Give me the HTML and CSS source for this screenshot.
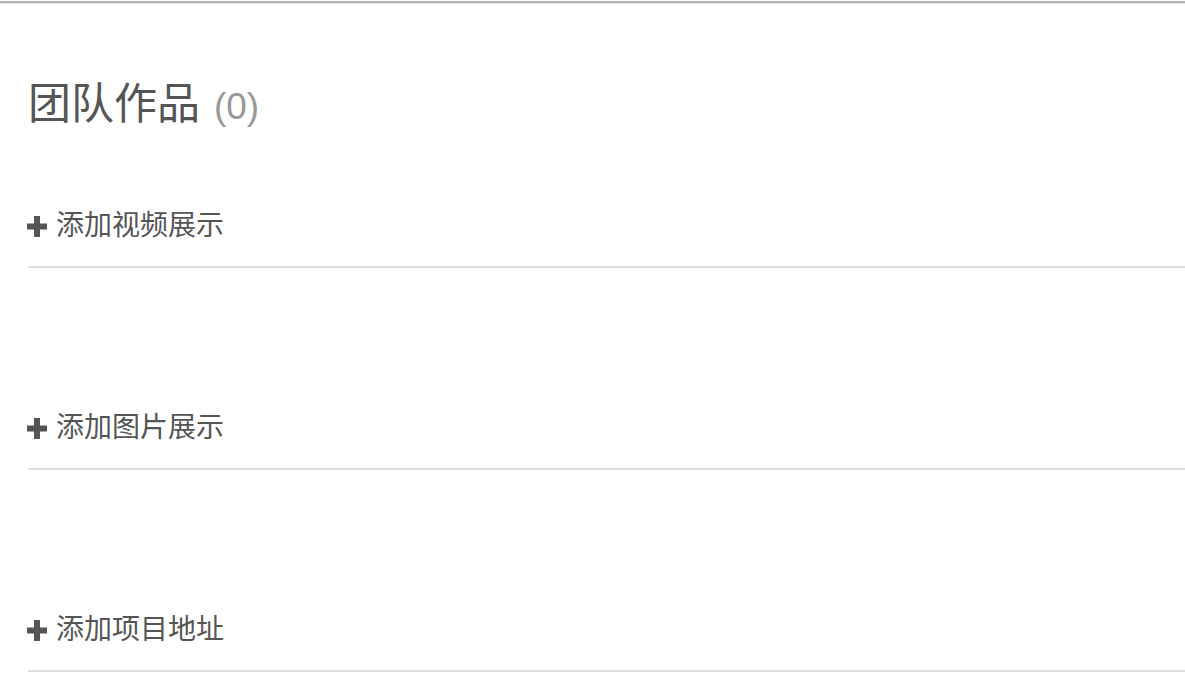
FILE: index.html
```html
<!DOCTYPE html>
<html lang="zh">
<head>
<meta charset="utf-8">
<title>团队作品</title>
<link rel="stylesheet" href="styles.css">
</head>
<body>
<div class="topbar"></div>
<main class="page">
  <h1 class="title">团队作品 <span class="count">(0)</span></h1>
  <div class="sections">
    <div class="section">
      <a class="add" href="#"><svg class="plus" viewBox="0 0 20 21" width="20" height="21"><path d="M7 0h6v7.5h7v6h-7V21H7v-7.5H0v-6h7z"/></svg><span>添加视频展示</span></a>
    </div>
    <div class="section">
      <a class="add" href="#"><svg class="plus" viewBox="0 0 20 21" width="20" height="21"><path d="M7 0h6v7.5h7v6h-7V21H7v-7.5H0v-6h7z"/></svg><span>添加图片展示</span></a>
    </div>
    <div class="section">
      <a class="add" href="#"><svg class="plus" viewBox="0 0 20 21" width="20" height="21"><path d="M7 0h6v7.5h7v6h-7V21H7v-7.5H0v-6h7z"/></svg><span>添加项目地址</span></a>
    </div>
  </div>
</main>
</body>
</html>
```

FILE: styles.css
```css
html, body {
  margin: 0;
  padding: 0;
  background: #fff;
}
body {
  font-family: "Liberation Sans", "Noto Sans CJK SC", sans-serif;
  color: #555;
}
.topbar {
  height: 2px;
  margin-top: 1px;
  background: #b4b4b4;
  border-bottom: 1px solid #e6e6e6;
}
.page {
  padding: 0 0 0 28px;
}
.title {
  margin: 75px 0 0 0;
  font-size: 43px;
  line-height: 50px;
  font-weight: normal;
  color: #555;
}
.count {
  font-size: 37px;
  color: #999;
  margin-left: 2px;
}
.sections {
  display: flex;
  flex-direction: column;
  gap: 140px;
  margin-top: 74px;
}
.section {
  border-bottom: 2px solid #dedede;
}
.add {
  display: flex;
  align-items: center;
  gap: 9px;
  padding-bottom: 20px;
  font-size: 28px;
  line-height: 40px;
  color: #555;
  text-decoration: none;
}
.plus {
  fill: #555;
  margin-left: -1px;
}
```
